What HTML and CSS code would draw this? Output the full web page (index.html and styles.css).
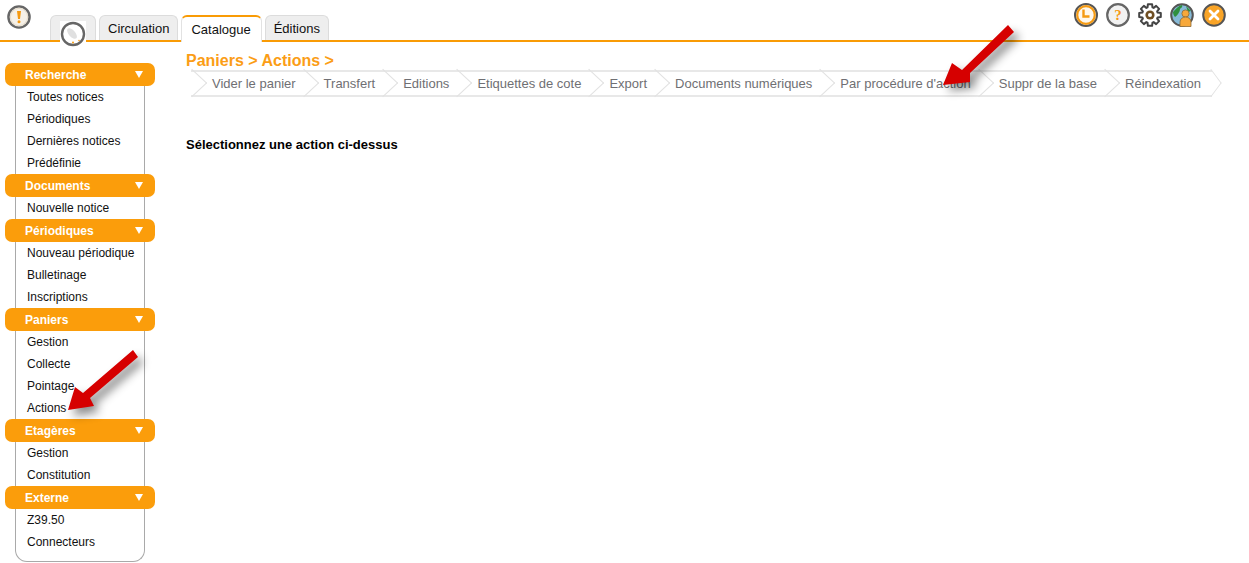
FILE: index.html
```html
<!DOCTYPE html>
<html lang="fr">
<head>
<meta charset="utf-8">
<title>Catalogue</title>
<link rel="stylesheet" href="styles.css">
</head>
<body>
<header class="topbar">
  <svg class="icon alert" viewBox="0 0 24 24"><circle cx="12" cy="12" r="10.6" fill="#f6f1e8" stroke="#666" stroke-width="2.4"/><circle cx="12" cy="12" r="8.600" fill="none" stroke="#e6dccb" stroke-width="1"/><path d="M10 6h4l-1 8h-2z" fill="#f59a12"/><circle cx="12" cy="16.800" r="1.500" fill="#f59a12"/></svg>
  <nav class="tabs">
    <a class="tab tab-home"><span class="home-badge"><svg viewBox="0 0 26 26"><circle cx="13" cy="13" r="11" fill="#fff" stroke="#666" stroke-width="2.400"/><ellipse cx="12" cy="12.500" rx="3.200" ry="6.500" transform="rotate(-42 12 12.500)" fill="#e0e0e0"/><circle cx="13" cy="21.500" r="1" fill="#f59a12"/><circle cx="19" cy="19.500" r=".8" fill="#f59a12"/></svg></span></a>
    <a class="tab">Circulation</a>
    <a class="tab active">Catalogue</a>
    <a class="tab">Éditions</a>
  </nav>
  <div class="tools">
    <svg class="icon" viewBox="0 0 24 24"><circle cx="12" cy="12" r="11" fill="#fff" stroke="#555" stroke-width="2"/><circle cx="12" cy="12" r="8.800" fill="#fff8ec" stroke="#f59a12" stroke-width="2.200"/><path d="M9.500 6.500v7h6" fill="none" stroke="#f59a12" stroke-width="2.400"/></svg>
    <svg class="icon" viewBox="0 0 24 24"><circle cx="12" cy="12" r="10.800" fill="#f2f2f2" stroke="#666" stroke-width="2.200"/><text x="12" y="17" class="help-mark">?</text></svg>
    <svg class="icon" viewBox="0 0 24 24"><polygon points="19.61,9.53 22.8,9.9 22.8,14.1 19.61,14.47 19.13,15.63 21.12,18.15 18.15,21.12 15.63,19.13 14.47,19.61 14.1,22.8 9.9,22.8 9.53,19.61 8.37,19.13 5.85,21.12 2.88,18.15 4.87,15.63 4.39,14.47 1.2,14.1 1.2,9.9 4.39,9.53 4.87,8.37 2.88,5.85 5.85,2.88 8.37,4.87 9.53,4.39 9.9,1.2 14.1,1.2 14.47,4.39 15.63,4.87 18.15,2.88 21.12,5.85 19.13,8.37" fill="#fff" stroke="#444" stroke-width="2" stroke-linejoin="round"/><circle cx="12" cy="12" r="4.600" fill="#6e4e22"/><circle cx="12" cy="12" r="2" fill="#fff"/></svg>
    <svg class="icon" viewBox="0 0 24 24"><circle cx="12" cy="12" r="10.800" fill="#86bad8" stroke="#555" stroke-width="2"/><path d="M3 9c3-3 5-6 9-7 1 2-1 3-2 4 0 3-3 7-5 8-1-1-2-3-2-5zM16 3l5 5-3 1z" fill="#2f8f3f"/><circle cx="15.500" cy="10.500" r="3.600" fill="#f7a83a" stroke="#8a6a3a" stroke-width=".8"/><path d="M10 23.500v-4.500c0-3 2.500-5 5.500-5s5.500 2 5.500 5v4.500z" fill="#f7a83a" stroke="#8a6a3a" stroke-width=".8"/></svg>
    <svg class="icon" viewBox="0 0 24 24"><circle cx="12" cy="12" r="10.800" fill="#f9a427" stroke="#555" stroke-width="2"/><path d="M8 8l8 8M16 8l-8 8" stroke="#fff" stroke-width="2.800" stroke-linecap="round"/></svg>
  </div>
</header>

<div class="layout">
  <aside class="sidebar">
    <h3 class="menu-head">Recherche</h3>
    <ul class="menu">
      <li>Toutes notices</li>
      <li>Périodiques</li>
      <li>Dernières notices</li>
      <li>Prédéfinie</li>
    </ul>
    <h3 class="menu-head">Documents</h3>
    <ul class="menu">
      <li>Nouvelle notice</li>
    </ul>
    <h3 class="menu-head">Périodiques</h3>
    <ul class="menu">
      <li>Nouveau périodique</li>
      <li>Bulletinage</li>
      <li>Inscriptions</li>
    </ul>
    <h3 class="menu-head">Paniers</h3>
    <ul class="menu">
      <li>Gestion</li>
      <li>Collecte</li>
      <li>Pointage</li>
      <li>Actions</li>
    </ul>
    <h3 class="menu-head">Etagères</h3>
    <ul class="menu">
      <li>Gestion</li>
      <li>Constitution</li>
    </ul>
    <h3 class="menu-head">Externe</h3>
    <ul class="menu menu-last">
      <li>Z39.50</li>
      <li>Connecteurs</li>
    </ul>
  </aside>
  <main class="content">
    <h1 class="title">Paniers &gt; Actions &gt;</h1>
    <ul class="steps">
      <li>Vider le panier</li>
      <li>Transfert</li>
      <li>Editions</li>
      <li>Etiquettes de cote</li>
      <li>Export</li>
      <li>Documents numériques</li>
      <li>Par procédure d'action</li>
      <li>Suppr de la base</li>
      <li>Réindexation</li>
    </ul>
    <p class="hint">Sélectionnez une action ci-dessus</p>
  </main>
</div>

<svg class="arrow arrow-top" viewBox="0 0 80 70"><path d="M66-2l6 7-44 41v9l-27 3 9-22 10 7z" fill="#d60000"/></svg>
<svg class="arrow arrow-side" viewBox="0 0 80 70"><path d="M65 0l5 7-48 41 4 8-26 4 7-23 8 6z" fill="#d60000"/></svg>
</body>
</html>
```
FILE: styles.css
```css
* { box-sizing: border-box; }
html, body { margin: 0; padding: 0; }
body {
  font-family: "Liberation Sans", Arial, sans-serif;
  color: #000;
  background: #fff;
  height: 563px;
  overflow: hidden;
  position: relative;
}
.topbar {
  display: flex;
  align-items: flex-start;
  height: 42px;
  border-bottom: 2px solid #f99b05;
  padding-left: 7px;
}
.icon { width: 24px; height: 24px; display: block; flex: none; }
.alert { margin-top: 5px; }
.tabs {
  display: flex;
  gap: 3px;
  margin-left: 19px;
  margin-top: 15px;
  height: 27px;
}
.tab {
  display: block;
  height: 25px;
  padding: 0 8px;
  font-size: 13px;
  line-height: 26px;
  color: #111;
  background: #eeeeee;
  border: 1px solid #dcdcdc;
  border-bottom: 0;
  border-radius: 6px 6px 0 0;
}
.tab-home { width: 46px; position: relative; }
.active {
  height: 27px;
  padding: 0 10px 0 9px;
  background: #fff;
  border-color: #e2e2e2;
  border-top: 2px solid #f99b05;
  line-height: 25px;
}
.home-badge {
  position: absolute;
  left: 9px;
  top: 5px;
  width: 26px;
  height: 26px;
  background: #fff;
}
.home-badge svg { display: block; width: 26px; height: 26px; }
.help-mark {
  font-family: "Liberation Serif", serif;
  font-weight: 700;
  font-size: 15px;
  fill: #f59a12;
  text-anchor: middle;
}
.tools {
  display: flex;
  gap: 8px;
  margin-left: auto;
  margin-top: 3px;
  margin-right: 23px;
}
.layout { display: flex; align-items: flex-start; }
.sidebar {
  width: 150px;
  margin-left: 5px;
  margin-top: 21px;
  flex: none;
}
.menu-head {
  position: relative;
  margin: 0;
  height: 23px;
  padding-left: 20px;
  background: #fb9d0b;
  border-radius: 7px;
  color: #fff;
  font-size: 12px;
  font-weight: 700;
  line-height: 24px;
}
.menu-head::after {
  content: "";
  position: absolute;
  right: 12px;
  top: 8px;
  border-left: 4px solid transparent;
  border-right: 4px solid transparent;
  border-top: 7px solid #fff;
}
.menu {
  list-style: none;
  margin: 0 10px;
  padding: 0;
  border-left: 1px solid #a9a9a9;
  border-right: 1px solid #a9a9a9;
  background: #fff;
}
.menu li {
  height: 22px;
  padding-left: 11px;
  font-size: 12px;
  line-height: 22px;
  color: #111;
  white-space: nowrap;
}
.menu-last {
  height: 53px;
  border-bottom: 1px solid #a9a9a9;
  border-radius: 0 0 12px 12px;
}
.content { margin-left: 31px; padding-top: 10px; flex: 1; min-width: 0; }
.title {
  margin: 0;
  font-size: 16px;
  line-height: 18px;
  font-weight: 700;
  color: #fb9d16;
}
.steps {
  list-style: none;
  display: flex;
  margin: 0 0 0 5px;
  padding: 0;
  height: 27px;
}
.steps li {
  position: relative;
  padding: 0 7px 0 21px;
  height: 27px;
  border-top: 2px solid #e8e8e8;
  border-bottom: 2px solid #e8e8e8;
  font-size: 13px;
  line-height: 24px;
  color: #6f6f73;
  white-space: nowrap;
}
.steps li::before {
  content: "";
  position: absolute;
  left: -9px;
  top: 1px;
  width: 19px;
  height: 19px;
  border-top: 1.500px solid #e2e2e2;
  border-right: 1.500px solid #e2e2e2;
  transform: scaleX(1.080) rotate(45deg);
}
.steps li:last-child { padding-right: 11px; }
.steps li:last-child::after {
  content: "";
  position: absolute;
  right: -9px;
  top: 1px;
  width: 19px;
  height: 19px;
  border-top: 1.500px solid #e2e2e2;
  border-right: 1.500px solid #e2e2e2;
  transform: scaleX(.750) rotate(45deg);
}
.hint {
  margin: 39px 0 0;
  font-size: 13px;
  font-weight: 700;
  line-height: 18px;
}
.arrow {
  position: absolute;
  width: 80px;
  height: 70px;
  overflow: visible;
  filter: drop-shadow(5px 6px 5px rgba(0, 0, 0, .45));
}
.arrow-top { left: 942px; top: 27px; }
.arrow-side { left: 68px; top: 350px; }
```
